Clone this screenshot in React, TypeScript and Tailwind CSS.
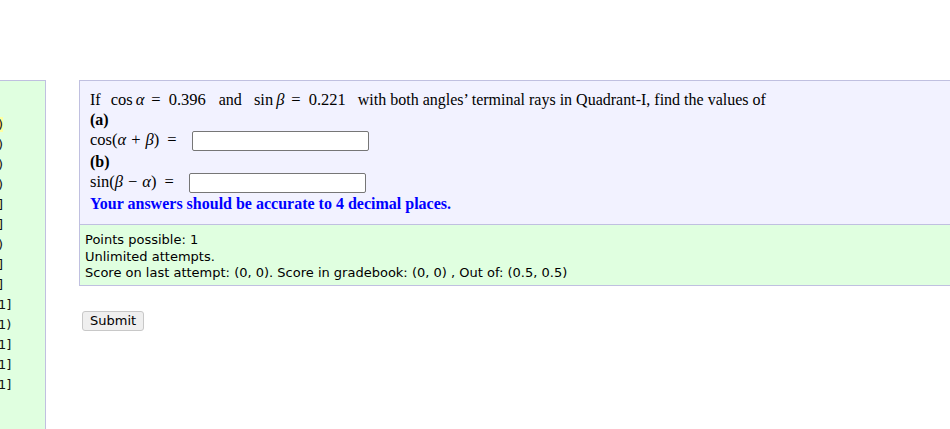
import React from "react";

const serif = { fontFamily: '"Liberation Serif", "Times New Roman", serif' };
const sans = { fontFamily: '"DejaVu Sans", Verdana, sans-serif' };

const leftItems: { t: string; hl?: boolean }[] = [
  { t: ")", hl: true },
  { t: ")" },
  { t: ")" },
  { t: ")" },
  { t: "]" },
  { t: "]" },
  { t: ")" },
  { t: "]" },
  { t: "]" },
  { t: "1]" },
  { t: "1)" },
  { t: "1]" },
  { t: "1]" },
  { t: "1]" },
];

function V({ c }: { c: string }) {
  return <span className="italic">{c}</span>;
}

export default function App() {
  return (
    <div className="w-[950px] h-[429px] overflow-hidden bg-white">
      <div className="flex items-start pt-[80px]">
        <div
          className="w-[46px] h-[400px] shrink-0 bg-[#e0ffe0] border-t border-r border-[#c0c0e0] pt-[34px] text-[13px] leading-[20px] text-[#111] overflow-hidden"
          style={sans}
        >
          {leftItems.map((it, i) => (
            <div key={i} className="-ml-[2px] whitespace-nowrap">
              <span className={it.hl ? "bg-[#ffffa0]" : ""}>{it.t}</span>
            </div>
          ))}
        </div>
        <div className="ml-[33px] flex flex-col shrink-0">
          <div className="w-[900px] border-t border-l border-b border-[#c0c0e0]">
            <div className="bg-[#f2f2ff] pl-[10px] pt-[9px] pb-[9px] text-[16px] text-black" style={serif}>
              <div className="flex items-center h-[20px] whitespace-nowrap">
                <span>If</span>
                <span className="ml-[10px] text-[16.5px]">cos</span>
                <span className="ml-[3px] text-[16.5px]"><V c="α" /></span>
                <span className="ml-[7px] mr-[8px] text-[16.5px]">=</span>
                <span className="text-[16.5px]">0.396</span>
                <span className="ml-[13px]">and</span>
                <span className="ml-[12px] text-[16.5px]">sin</span>
                <span className="ml-[3px] text-[16.5px]"><V c="β" /></span>
                <span className="ml-[7px] mr-[8px] text-[16.5px]">=</span>
                <span className="text-[16.5px]">0.221</span>
                <span className="ml-[12px]">with both angles’ terminal rays in Quadrant-I, find the values of</span>
              </div>
              <div className="flex items-center h-[20px] font-bold">(a)</div>
              <div className="flex items-center h-[21px] whitespace-nowrap text-[16.5px]">
                <span>cos(</span>
                <V c="α" />
                <span className="mx-[5px]">+</span>
                <V c="β" />
                <span>)</span>
                <span className="ml-[8px]">=</span>
                <input
                  type="text"
                  className="ml-[15px] w-[177px] h-[20px] bg-white border border-[#767676] rounded-[2px]"
                />
              </div>
              <div className="flex items-center h-[21px] font-bold">(b)</div>
              <div className="flex items-center h-[21px] whitespace-nowrap text-[16.5px]">
                <span>sin(</span>
                <V c="β" />
                <span className="mx-[5px]">−</span>
                <V c="α" />
                <span>)</span>
                <span className="ml-[8px]">=</span>
                <input
                  type="text"
                  className="ml-[15px] w-[177px] h-[20px] bg-white border border-[#767676] rounded-[2px]"
                />
              </div>
              <div className="flex items-center h-[22px] font-bold text-[#0000ff]">
                Your answers should be accurate to 4 decimal places.
              </div>
            </div>
            <div
              className="bg-[#e0ffe0] border-t border-[#c0c0e0] pl-[5px] pt-[7px] pb-[3px] text-[13px] leading-[16.5px] text-black"
              style={sans}
            >
              <div>Points possible: 1</div>
              <div>Unlimited attempts.</div>
              <div>Score on last attempt: (0, 0). Score in gradebook: (0, 0) , Out of: (0.5, 0.5)</div>
            </div>
          </div>
          <div className="mt-[25px] ml-[3px] flex">
            <button
              className="h-[20px] px-[7px] bg-[#efefef] border border-[#c8c8c8] rounded-[3px] text-[13px] leading-none text-black"
              style={sans}
            >
              Submit
            </button>
          </div>
        </div>
      </div>
    </div>
  );
}
